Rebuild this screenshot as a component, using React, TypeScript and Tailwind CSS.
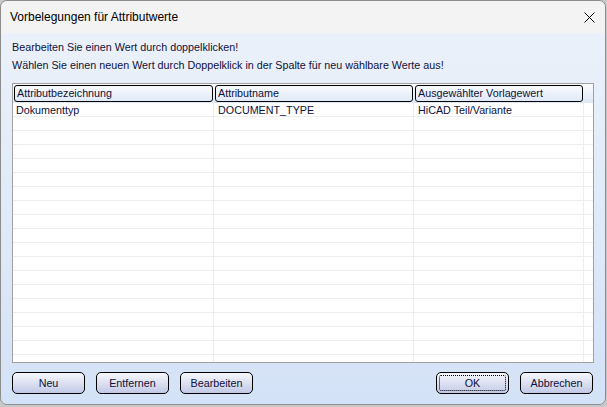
const rows = [
  ["Dokumenttyp", "DOCUMENT_TYPE", "HiCAD Teil/Variante"],
  ...Array.from({ length: 19 }, () => ["", "", ""]),
]

function Btn({ label, focus }: { label: string; focus?: boolean }) {
  return (
    <button className="relative w-[73px] h-[22px] rounded-[5px] border border-black bg-gradient-to-b from-[#f7f8fc] to-[#c2c9e6] text-[10.75px] text-[#10103a] flex items-center justify-center">
      {focus && <span className="absolute inset-[2px] rounded-[2px] border border-dotted border-black" />}
      {label}
    </button>
  )
}

export default function App() {
  return (
    <div className="w-[607px] h-[407px] bg-[#c8c8c8] overflow-hidden" style={{ fontFamily: '"Liberation Sans", Arial, sans-serif' }}>
      <div className="w-[606px] h-[405px] flex flex-col border border-[#8c8c8c] rounded-[7px] overflow-hidden">
        {/* title bar */}
        <div className="h-[32px] shrink-0 bg-[#f3f3f3] flex items-center justify-between pl-[9px] pr-[9px]">
          <span className="text-[12px] text-black">Vorbelegungen für Attributwerte</span>
          <svg width="11" height="11" viewBox="0 0 11 11" className="mr-[1px]">
            <path d="M0.5 0.5 L10.5 10.5 M10.5 0.5 L0.5 10.5" stroke="#000" strokeWidth="1" fill="none" />
          </svg>
        </div>

        {/* content */}
        <div className="flex-1 flex flex-col bg-gradient-to-b from-[#ebf1fa] to-[#d4e2f7] px-[11px] pt-[5px]">
          <div className="text-[10.75px] leading-[18px] text-[#10103a]">
            <p>Bearbeiten Sie einen Wert durch doppelklicken!</p>
            <p>Wählen Sie einen neuen Wert durch Doppelklick in der Spalte für neu wählbare Werte aus!</p>
          </div>

          {/* table */}
          <div className="mt-[9px] h-[280px] border border-[#a0a0a0] bg-white overflow-hidden flex flex-col">
            <div className="h-[19px] shrink-0 flex items-stretch py-[1px] bg-gradient-to-b from-[#fbfcfe] to-[#dde7f6] text-[10.75px] text-[#10103a]">
              <div className="w-[201px] px-[1px]">
                <div className="h-full border border-black rounded-[3px] pl-[2px] flex items-center">Attributbezeichnung</div>
              </div>
              <div className="w-[200px] px-[1px]">
                <div className="h-full border border-black rounded-[3px] pl-[2px] flex items-center">Attributname</div>
              </div>
              <div className="w-[170px] px-[1px]">
                <div className="h-full border border-black rounded-[3px] pl-[2px] flex items-center">Ausgewählter Vorlagewert</div>
              </div>
            </div>
            {rows.map((r, i) => (
              <div key={i} className="h-[14px] shrink-0 flex border-b border-[#ededed] text-[10.75px] text-[#10103a]">
                <div className="w-[201px] border-r border-[#ededed] pl-[3px] leading-[14px]">{r[0]}</div>
                <div className="w-[200px] border-r border-[#ededed] pl-[4px] leading-[14px]">{r[1]}</div>
                <div className="w-[170px] border-r border-[#ededed] pl-[4px] leading-[14px]">{r[2]}</div>
                <div className="flex-1" />
              </div>
            ))}
          </div>

          {/* buttons */}
          <div className="mt-[9px] flex items-center">
            <div className="flex gap-[11px]">
              <Btn label="Neu" />
              <Btn label="Entfernen" />
              <Btn label="Bearbeiten" />
            </div>
            <div className="ml-auto flex gap-[11px] pr-[1px]">
              <Btn label="OK" focus />
              <Btn label="Abbrechen" />
            </div>
          </div>
        </div>
      </div>
    </div>
  )
}
